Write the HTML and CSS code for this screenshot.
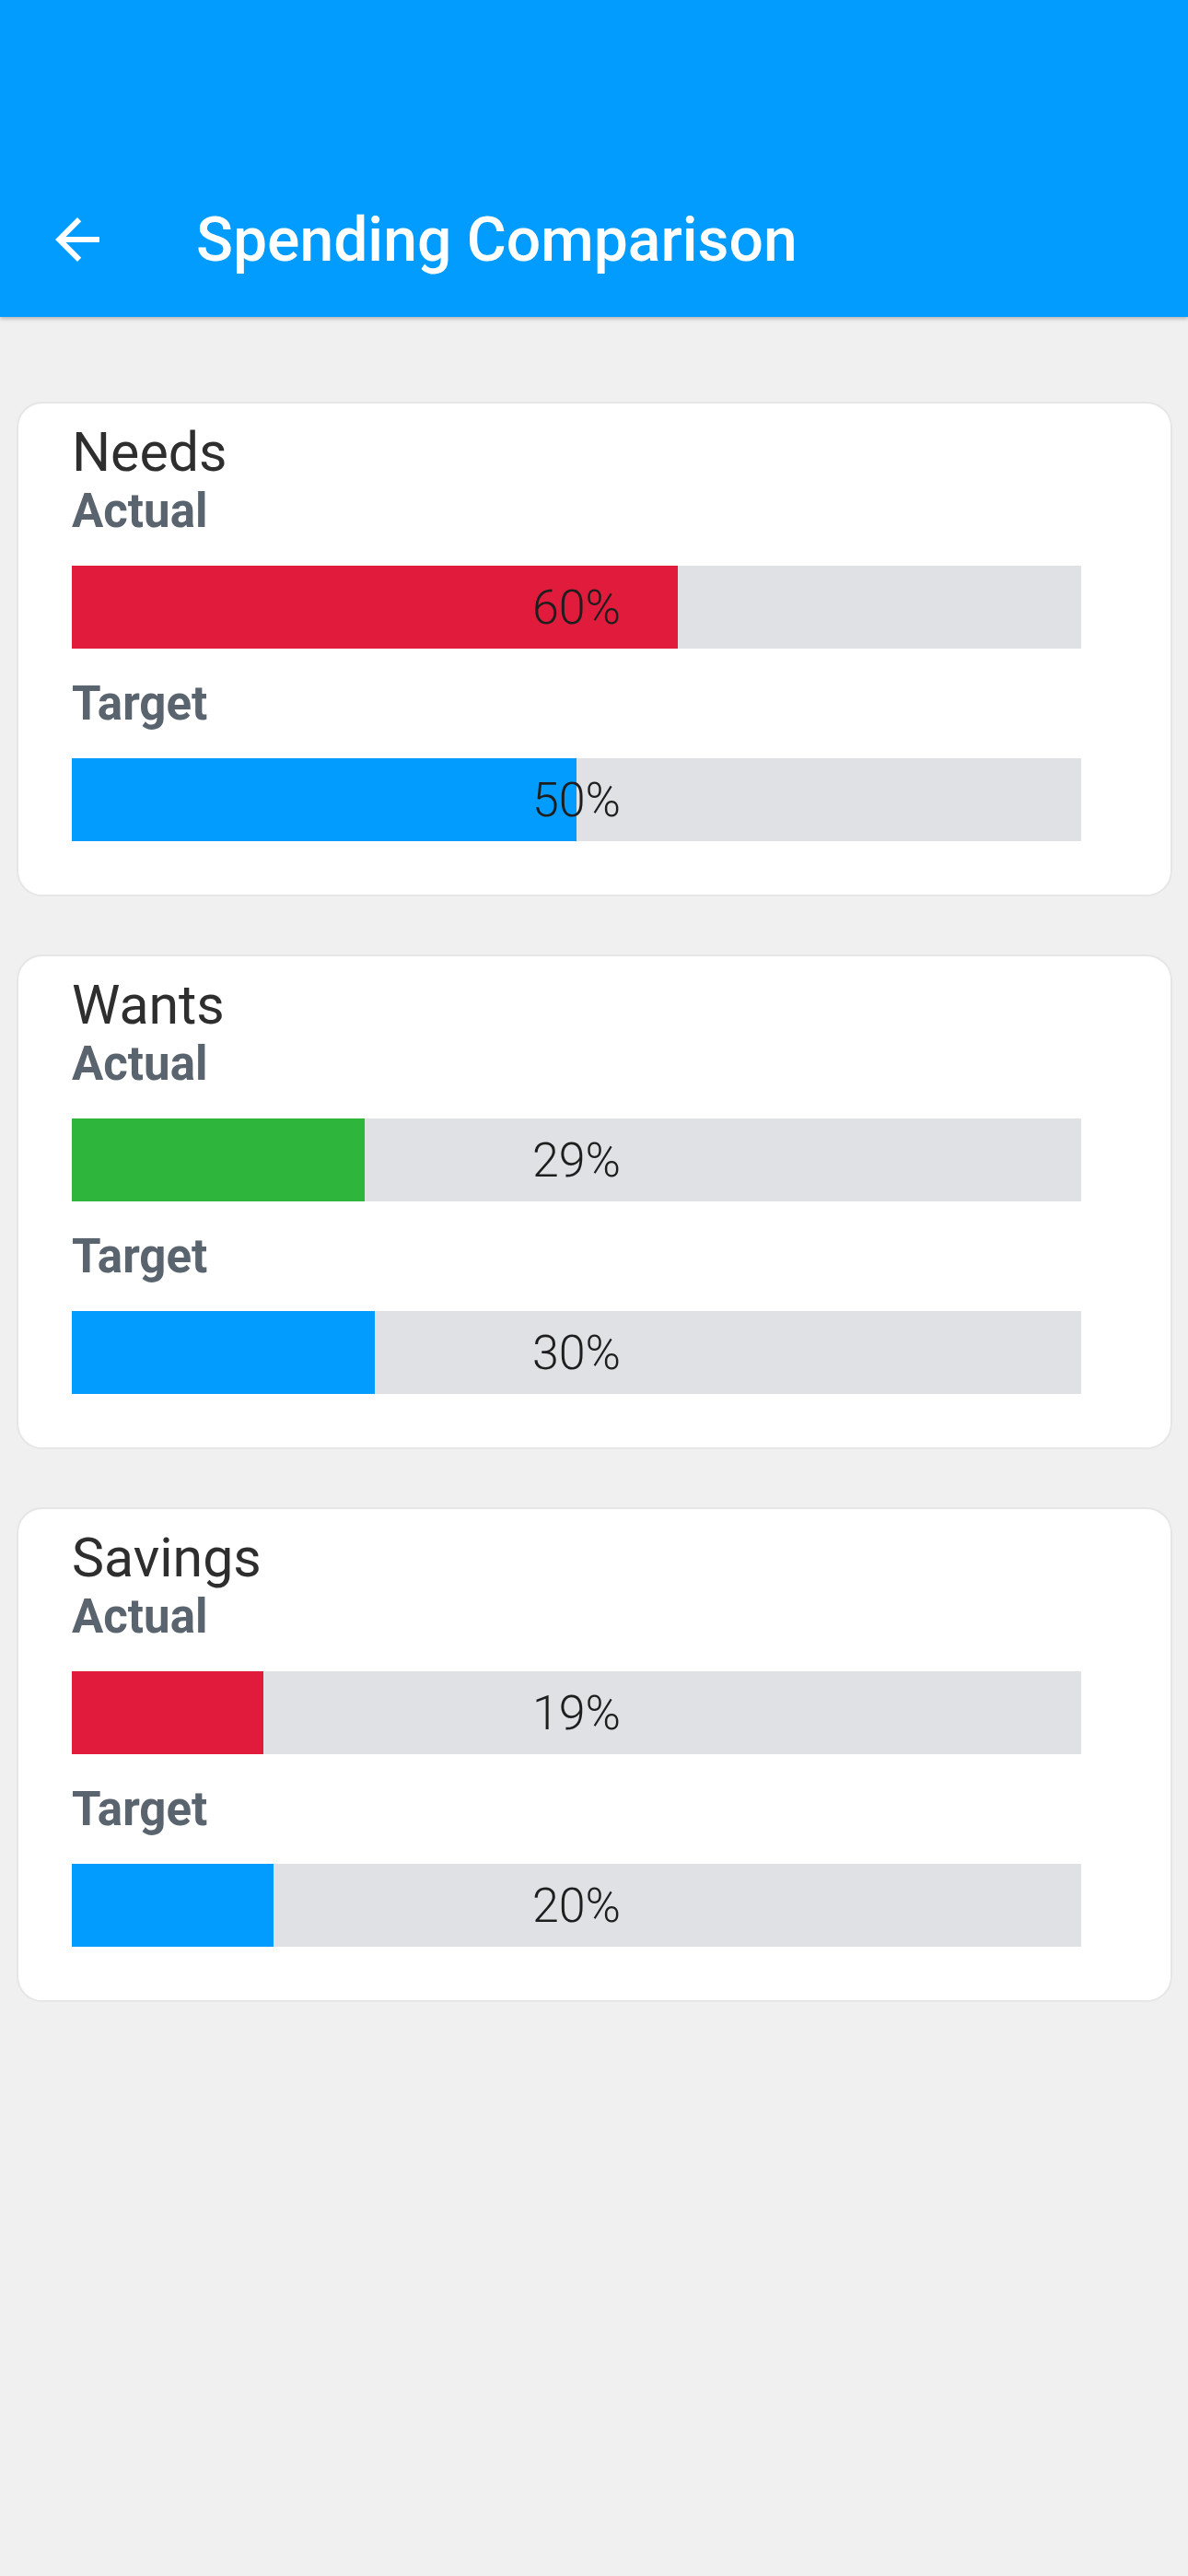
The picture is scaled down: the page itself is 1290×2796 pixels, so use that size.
FILE: index.html
```html
<!DOCTYPE html>
<html lang="en">
<head>
  <meta charset="UTF-8" />
  <meta name="viewport" content="width=device-width, initial-scale=1.0" />
  <title>Spending Comparison</title>
  <link rel="stylesheet" href="styles.css">
</head>
<body>
  <header class="appbar">
    <div class="toolbar">
      <button class="back" aria-label="Back">
        <svg viewBox="0 0 24 24" width="72" height="72">
          <path d="M20 11H7.83l5.59-5.59L12 4l-8 8 8 8 1.41-1.41L7.83 13H20v-2z" fill="#fff"/>
        </svg>
      </button>
      <h1 class="title">Spending Comparison</h1>
    </div>
  </header>

  <main class="list">
    <section class="card">
      <h2 class="card-title">Needs</h2>
      <div class="label">Actual</div>
      <div class="bar">
        <div class="fill red" style="width: 60%"></div>
        <span class="value">60%</span>
      </div>
      <div class="label">Target</div>
      <div class="bar">
        <div class="fill blue" style="width: 50%"></div>
        <span class="value">50%</span>
      </div>
    </section>

    <section class="card">
      <h2 class="card-title">Wants</h2>
      <div class="label">Actual</div>
      <div class="bar">
        <div class="fill green" style="width: 29%"></div>
        <span class="value">29%</span>
      </div>
      <div class="label">Target</div>
      <div class="bar">
        <div class="fill blue" style="width: 30%"></div>
        <span class="value">30%</span>
      </div>
    </section>

    <section class="card">
      <h2 class="card-title">Savings</h2>
      <div class="label">Actual</div>
      <div class="bar">
        <div class="fill red" style="width: 19%"></div>
        <span class="value">19%</span>
      </div>
      <div class="label">Target</div>
      <div class="bar">
        <div class="fill blue" style="width: 20%"></div>
        <span class="value">20%</span>
      </div>
    </section>
  </main>
</body>
</html>
```

FILE: styles.css
```css
* {
  box-sizing: border-box;
}
body {
  margin: 0;
  font-family: Roboto, 'Liberation Sans', sans-serif;
  background: #f0f0f0;
  min-height: 100vh;
}
.appbar {
  height: 344px;
  background: #029cfe;
  display: flex;
  flex-direction: column;
  justify-content: flex-end;
  padding-bottom: 9px;
  box-shadow: 0 2px 4px rgba(0,0,0,0.25);
  position: relative;
}
.toolbar {
  height: 150px;
  display: flex;
  align-items: center;
  padding-left: 48px;
}
.back {
  width: 72px;
  height: 72px;
  padding: 0;
  border: none;
  background: none;
  display: flex;
  cursor: pointer;
}
.title {
  margin: 0 0 0 93px;
  color: #fff;
  font-size: 66px;
  font-weight: 500;
}
.list {
  padding: 92px 17px 0 18px;
  display: flex;
  flex-direction: column;
  gap: 63px;
}
.card {
  background: #fff;
  border: 2px solid #e6e6e6;
  border-radius: 28px;
  padding: 18px 97px 58px 58px;
}
.card-title {
  margin: 0;
  font-size: 59px;
  font-weight: 400;
  color: #2e2e2e;
}
.label {
  font-size: 51px;
  font-weight: 700;
  color: #5a646e;
}
.bar {
  position: relative;
  height: 90px;
  margin: 30px 0;
  background: #e0e1e5;
  display: flex;
  align-items: center;
  justify-content: center;
}
.bar:last-child {
  margin-bottom: 0;
}
.fill {
  position: absolute;
  left: 0;
  top: 0;
  bottom: 0;
}
.fill.red {
  background: #e11b3c;
}
.fill.green {
  background: #2db63b;
}
.fill.blue {
  background: #029cfe;
}
.value {
  position: relative;
  font-size: 52px;
  font-weight: 300;
  color: #1e1e1e;
}
```
